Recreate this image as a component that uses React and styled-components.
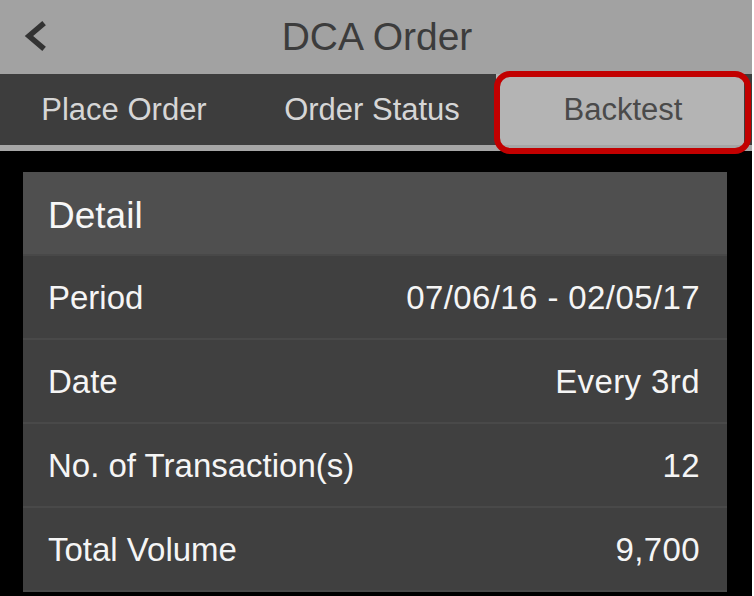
import React from "react";
import styled, { createGlobalStyle } from "styled-components";

const GlobalStyle = createGlobalStyle`
  html, body {
    margin: 0;
    padding: 0;
    background: #ffffff;
  }
  body {
    font-family: "Liberation Sans", Arial, sans-serif;
  }
`;

const rows = [
  { label: "Period", value: "07/06/16 - 02/05/17" },
  { label: "Date", value: "Every 3rd" },
  { label: "No. of Transaction(s)", value: "12" },
  { label: "Total Volume", value: "9,700" },
];

const tabs = ["Place Order", "Order Status", "Backtest"];

function App() {
  return (
    <>
      <GlobalStyle />
      <Screen>
        <Header>
          <BackButton>
            <svg width="24" height="32" viewBox="0 0 24 32">
              <polyline
                points="18,4 5,15 18,26"
                fill="none"
                stroke="#333"
                strokeWidth="5.5"
                strokeLinecap="square"
                strokeLinejoin="miter"
              />
            </svg>
          </BackButton>
          <Title>DCA Order</Title>
        </Header>

        <TabBar>
          {tabs.map((t, i) => (
            <Tab key={t} active={i === 2}>
              {t}
            </Tab>
          ))}
          <Highlight />
        </TabBar>

        <Body>
          <Card>
            <CardHeader>Detail</CardHeader>
            {rows.map((r) => (
              <Row key={r.label}>
                <span>{r.label}</span>
                <Value>{r.value}</Value>
              </Row>
            ))}
          </Card>
        </Body>
      </Screen>
    </>
  );
}

export default App;

const Screen = styled.div`
  width: 752px;
  height: 596px;
  background: #000;
  display: flex;
  flex-direction: column;
  overflow: hidden;
`;

const Header = styled.div`
  position: relative;
  height: 74px;
  flex-shrink: 0;
  background: #a2a2a2;
  display: flex;
  align-items: center;
  justify-content: center;
`;

const BackButton = styled.div`
  position: absolute;
  left: 24px;
  top: 21px;
  width: 24px;
  height: 32px;
`;

const Title = styled.div`
  font-size: 39px;
  color: #3c3c3c;
  margin-left: 2px;
`;

const TabBar = styled.div`
  position: relative;
  height: 71px;
  flex-shrink: 0;
  background: #3d3d3d;
  border-bottom: 6px solid #a6a6a6;
  display: grid;
  grid-template-columns: repeat(3, 248px);
`;

const Tab = styled.div`
  display: flex;
  align-items: center;
  justify-content: center;
  font-size: 31px;
  color: ${(p) => (p.active ? "#4a4a4a" : "#d6d6d6")};
  background: ${(p) => (p.active ? "#b4b4b4" : "transparent")};
  padding-left: ${(p) => (p.active ? "6px" : "0")};
`;

const Highlight = styled.div`
  position: absolute;
  left: 494px;
  top: -3px;
  width: 245px;
  height: 71px;
  border: 6px solid #c20000;
  border-radius: 16px;
  pointer-events: none;
`;

const Body = styled.div`
  flex: 1;
  padding: 21px 25px 0 23px;
`;

const Card = styled.div`
  background: #404040;
`;

const CardHeader = styled.div`
  height: 76px;
  padding: 6px 0 0 25px;
  background: #4f4f4f;
  border-bottom: 2px solid #484848;
  display: flex;
  align-items: center;
  font-size: 37px;
  color: #f7f7f7;
`;

const Row = styled.div`
  height: 80px;
  border-bottom: 2px solid #494949;
  display: flex;
  align-items: center;
  justify-content: space-between;
  padding: 2px 27px 0 25px;
  font-size: 33px;
  color: #f5f5f5;
`;

const Value = styled.span`
  letter-spacing: 0.4px;
`;
